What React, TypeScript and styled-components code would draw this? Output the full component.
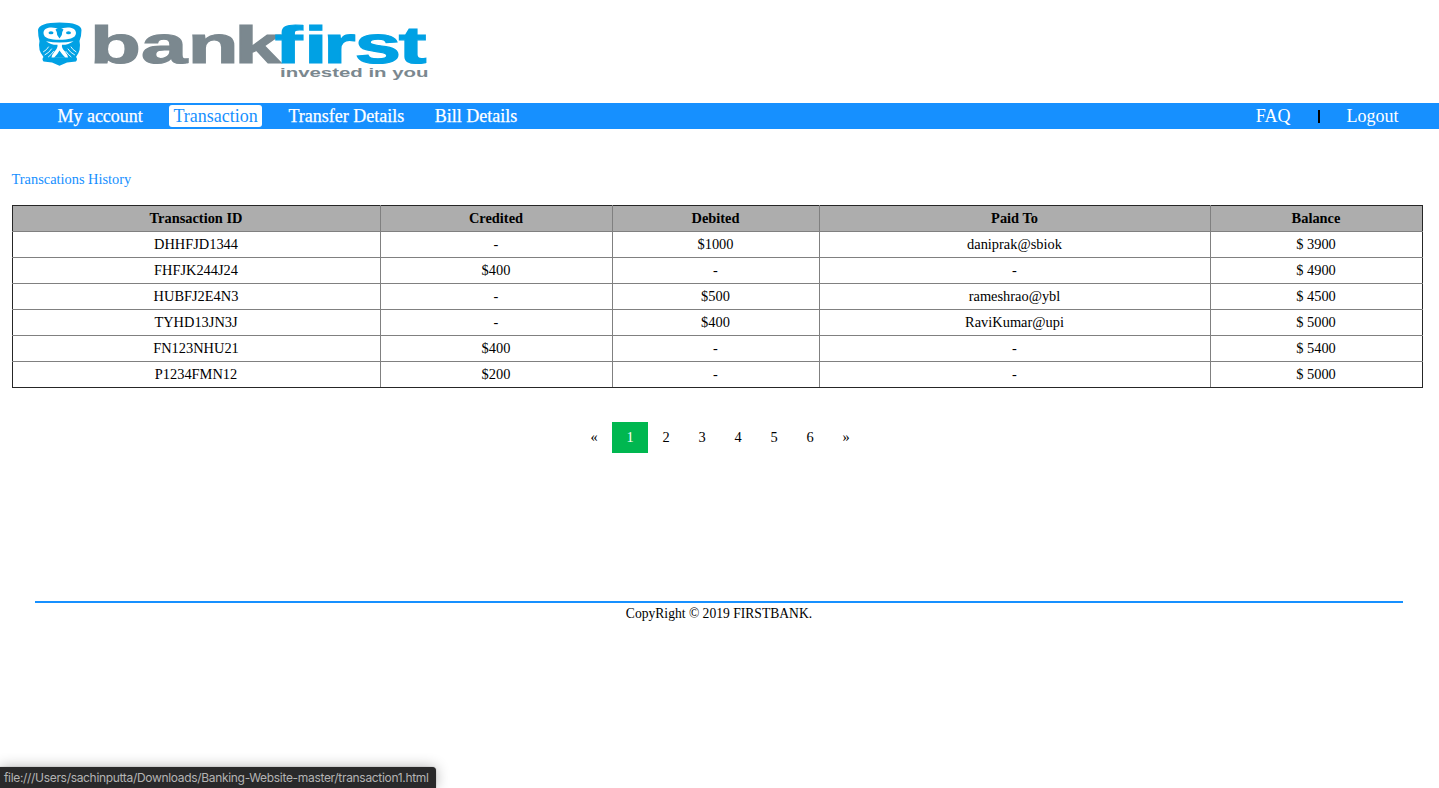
import React from "react";
import styled, { createGlobalStyle } from "styled-components";

const GlobalStyle = createGlobalStyle`
  body {
    margin: 0;
    background: #fff;
    color: #000;
    font-family: "Liberation Serif", "Times New Roman", serif;
    font-size: 14.4px;
  }
`;

const Page = styled.div`
  position: relative;
  display: flex;
  flex-direction: column;
  height: 788px;
  overflow: hidden;
`;

const Header = styled.header`
  height: 103px;
  flex: none;
`;

const Logo = styled.svg`
  display: block;
`;

const NavBar = styled.nav`
  display: flex;
  justify-content: space-between;
  align-items: center;
  height: 26px;
  flex: none;
  padding: 0 36.5px 0 53.4px;
  background: #1690ff;
  font-size: 18px;
`;

const NavGroup = styled.div<{ $gap: number }>`
  display: flex;
  align-items: center;
  gap: ${(p) => p.$gap}px;
`;

const NavLink = styled.a<{ $active?: boolean; $weight?: number }>`
  box-sizing: border-box;
  height: 22px;
  padding: 0 4px;
  line-height: 23px;
  border-radius: 3px;
  white-space: nowrap;
  color: ${(p) => (p.$active ? "#1690ff" : "#fff")};
  background: ${(p) => (p.$active ? "#fff" : "transparent")};
  -webkit-text-stroke: ${(p) => (p.$weight ? `${p.$weight}px` : "0")};
`;

const Separator = styled.span`
  width: 2px;
  height: 13px;
  background: #000;
`;

const Main = styled.main`
  padding: 42px 16px 0 12px;
`;

const Title = styled.h1`
  margin: 0 0 17px;
  font-size: 14.4px;
  line-height: 17px;
  font-weight: 400;
  text-indent: -0.5px;
  color: #1690ff;
`;

const Table = styled.table`
  width: 1411px;
  table-layout: fixed;
  border-collapse: collapse;
  border: 1px solid #262626;
  text-align: center;
`;

const Column = styled.col<{ $width: number }>`
  width: ${(p) => p.$width}px;
`;

const HeadCell = styled.th`
  height: 25px;
  padding: 0 1px 0 0;
  line-height: 17px;
  background: #adadad;
  border: 1px solid #808080;
  border-top-color: #262626;
  &:first-child { border-left-color: #262626; }
  &:last-child { border-right-color: #262626; }
`;

const Cell = styled.td`
  height: 25px;
  padding: 0 1px 0 0;
  line-height: 17px;
  border: 1px solid #808080;
  &:first-child { border-left-color: #262626; }
  &:last-child { border-right-color: #262626; }
  tr:last-child > & { border-bottom-color: #262626; }
`;

const Pagination = styled.div`
  display: flex;
  justify-content: center;
  margin: 34px 0 0 4px;
`;

const PageLink = styled.a<{ $active?: boolean }>`
  box-sizing: border-box;
  width: 36px;
  height: 31px;
  padding-left: 1px;
  line-height: 31px;
  text-align: center;
  color: ${(p) => (p.$active ? "#fff" : "#000")};
  background: ${(p) => (p.$active ? "#00b750" : "transparent")};
`;

const Footer = styled.footer`
  margin: 148px 36px 0 35px;
  padding-top: 3px;
  border-top: 2px solid #1690ff;
  text-align: center;
  font-size: 13.6px;
  line-height: 16px;
`;

const StatusBar = styled.div`
  position: absolute;
  left: 0;
  bottom: 0;
  box-sizing: border-box;
  width: 436px;
  height: 21px;
  padding-left: 4px;
  border-top-right-radius: 4px;
  background: #29292a;
  box-shadow: 0 0 14px rgba(0, 0, 0, 0.3), 0 0 1px rgba(0, 0, 0, 0.6);
  color: #b4b4b4;
  font: 12px/21px Inter, sans-serif;
  letter-spacing: -0.32px;
  white-space: nowrap;
`;

const columns = [
  { name: "Transaction ID", width: 368 },
  { name: "Credited", width: 232 },
  { name: "Debited", width: 207 },
  { name: "Paid To", width: 391 },
  { name: "Balance", width: 212 },
];

const rows = [
  ["DHHFJD1344", "-", "$1000", "daniprak@sbiok", "$ 3900"],
  ["FHFJK244J24", "$400", "-", "-", "$ 4900"],
  ["HUBFJ2E4N3", "-", "$500", "rameshrao@ybl", "$ 4500"],
  ["TYHD13JN3J", "-", "$400", "RaviKumar@upi", "$ 5000"],
  ["FN123NHU21", "$400", "-", "-", "$ 5400"],
  ["P1234FMN12", "$200", "-", "-", "$ 5000"],
];

const pages = ["«", "1", "2", "3", "4", "5", "6", "»"];

function BankLogo() {
  return (
    <Logo width="440" height="100" viewBox="0 0 440 100">
      <path
        fill="#00a1e4"
        d="M38 30Q39 22.500 59.500 22.500Q81 22.500 81.500 30Q81.500 36 79.500 41Q81.500 50 76 57Q78 59 76 61.500L67 62.500L59.500 65.800L52 62.500L43.500 61.500Q41.500 59 43.500 57Q37.500 50 39.500 41Q38 36 38 30Z"
      />
      <path
        fill="#fff"
        d="M43.500 33C43.500 27 54 26 59.500 30C65 26 76 27 76 33C76 38.500 68 39.800 59.500 39.800C51 39.800 43.500 38.500 43.500 33Z"
      />
      <path fill="#00a1e4" d="M55.500 29.500Q59.500 27 63.500 29.500Q62 31.500 61.800 35L59.500 38.500L57.200 35Q57 31.500 55.500 29.500Z" />
      <ellipse cx="51" cy="32.700" rx="2.500" ry="1.500" fill="#00a1e4" />
      <ellipse cx="68.500" cy="32.700" rx="2.500" ry="1.500" fill="#00a1e4" />
      <path fill="#fff" d="M46 41.200Q59.500 43.800 73.500 41.200Q68 45 62 44.800Q61.200 48 65 51.500Q67.500 54.500 68 57.500H51.500Q52 54.500 54.500 51.500Q58 48 57.500 44.800Q51 45 46 41.200Z" />
      <path fill="#00a1e4" d="M59.500 50.500Q62 54.500 65.500 57.800H54Q57.500 54.500 59.500 50.500Z" />
      <path
        fill="none"
        stroke="#fff"
        strokeWidth="0.900"
        strokeLinecap="round"
        d="M48.500 47Q47 49.800 43.500 51.800M51.500 49Q49.500 52.500 45 54.800M53.500 51.500Q51.500 54.500 48.500 56.800M71 47Q72.500 49.800 76 51.800M68 49Q70 52.500 74.500 54.800M66 51.500Q68 54.500 71 56.800"
      />
      <g
        transform="translate(0 62.500) scale(1.6 1)"
        fontFamily="Liberation Sans, Arial, sans-serif"
        fontWeight="700"
        fontSize="52"
        strokeWidth="1.200"
      >
        <text fill="#7b888f" stroke="#7b888f" x="56.300 88.100 117.300 146.500">bank</text>
        <text fill="#00a1e4" stroke="#00a1e4" x="171.800 190.100 202.100 221.700 249.300">first</text>
      </g>
      <text
        transform="translate(280 77) scale(1.350 1)"
        fontFamily="Liberation Sans, Arial, sans-serif"
        fontWeight="700"
        fontSize="13.500"
        fill="#7b888f"
        textLength="110"
        lengthAdjust="spacingAndGlyphs"
      >
        invested in you
      </text>
    </Logo>
  );
}

export default function App() {
  return (
    <Page>
      <GlobalStyle />
      <Header>
        <BankLogo />
      </Header>
      <NavBar>
        <NavGroup $gap={22.6}>
          <NavLink $weight={0.25}>My account</NavLink>
          <NavLink $active>Transaction</NavLink>
          <NavLink $weight={0.25}>Transfer Details</NavLink>
          <NavLink $weight={0.25}>Bill Details</NavLink>
        </NavGroup>
        <NavGroup $gap={23}>
          <NavLink>FAQ</NavLink>
          <Separator />
          <NavLink>Logout</NavLink>
        </NavGroup>
      </NavBar>
      <Main>
        <Title>Transcations History</Title>
        <Table>
          <colgroup>
            {columns.map((c) => (
              <Column key={c.name} $width={c.width} />
            ))}
          </colgroup>
          <thead>
            <tr>
              {columns.map((c) => (
                <HeadCell key={c.name}>{c.name}</HeadCell>
              ))}
            </tr>
          </thead>
          <tbody>
            {rows.map((row) => (
              <tr key={row[0]}>
                {row.map((value, i) => (
                  <Cell key={i}>{value}</Cell>
                ))}
              </tr>
            ))}
          </tbody>
        </Table>
        <Pagination>
          {pages.map((p) => (
            <PageLink key={p} $active={p === "1"}>
              {p}
            </PageLink>
          ))}
        </Pagination>
      </Main>
      <Footer>CopyRight © 2019 FIRSTBANK.</Footer>
      <StatusBar>file:///Users/sachinputta/Downloads/Banking-Website-master/transaction1.html</StatusBar>
    </Page>
  );
}
